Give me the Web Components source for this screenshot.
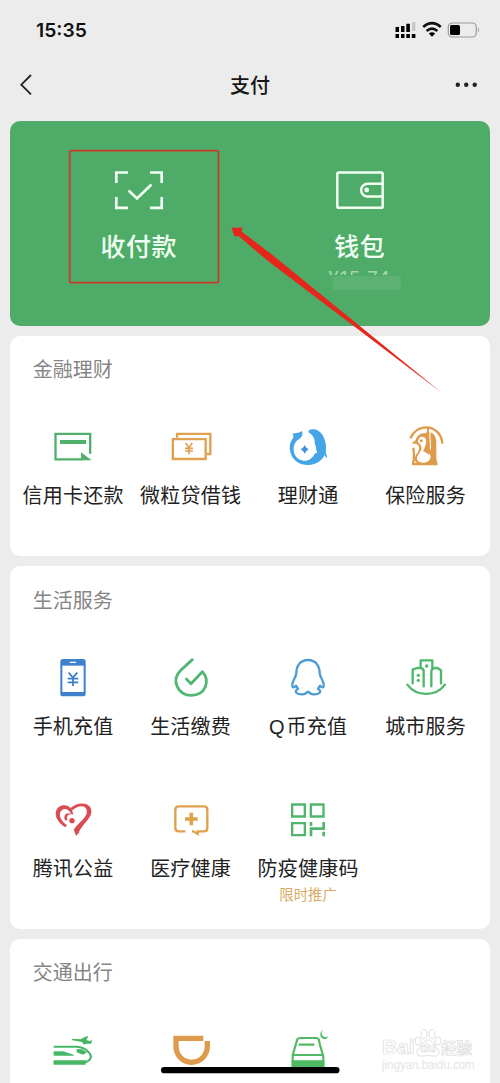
<!DOCTYPE html>
<html lang="zh-CN">
<head>
<meta charset="utf-8">
<title>支付</title>
<style>
html,body{margin:0;height:1083px;overflow:hidden;background:#ececec;font-family:"Noto Sans CJK SC","Noto Sans",sans-serif}
</style>
</head>
<body>
<pay-screen></pay-screen>
<script>
const ICONS = {
card:`<g fill="none" stroke="#4fb06b" stroke-width="7"><path d="M111.5 80V20.5H7.5V97H88"/><path d="M21 45H99" stroke-width="12"/></g><path fill="#4fb06b" d="M84 76L116 100H84Z"/>`,
loan:`<g fill="none" stroke="#dfa04f" stroke-width="7"><path d="M18.5 32V20.5H118V81H108"/><path d="M5.5 36.5H104V96H5.5Z"/></g><g fill="none" stroke="#dfa04f" stroke-width="5"><path d="M44 48L54 62L64 48M54 62V82M42 64H66M42 72H66"/></g>`,
fish:`<path fill="#45a5e8" d="M42 11C36 18 24 17 13 20C17 25 17 28 15 34C5 46 3 62 8 78C14 102 38 116 64 114C88 112 104 98 109 84L117 94C118 88 116 83 113 78C119 46 104 10 78 7C68 5 61 9 61 16C72 22 80 32 80 44C79 53 87 60 84 68L88 76L80 80C74 93 62 101 50 101C30 101 17 86 17 66C17 50 26 40 37 33C43 28 45 20 42 11Z"/><path fill="#3f91dc" d="M50 54L55 62L62 67L55 72L50 80L45 72L38 67L45 62Z"/>`,
insure:`<g fill="none" stroke="#df9b4c" stroke-width="7"><path d="M13 34C24 10 44 0 64 1C90 3 108 25 109 50"/><path d="M22 62Q26 84 21 112"/></g><path fill="#df9b4c" d="M66 14C82 16 91 26 91 46V91C91 101 95 107 95 115H18V108H33C24 103 25 91 31 82C36 75 40 70 39 60C37 49 26 52 17 48L29 40C32 26 43 17 58 19Z"/><path fill="#fff" d="M43 30C60 26 64 40 58 56L52 72L68 77C80 86 73 107 52 107C34 107 28 94 37 83C43 74 48 69 46 58C43 49 34 48 36 40Z"/><path d="M72 12C70 36 75 52 73 68" stroke="#fff" stroke-width="3.5" fill="none"/><path d="M66 3C64 32 69 48 67 78L53 69" stroke="#df9b4c" stroke-width="6" fill="none"/><circle cx="46" cy="41" r="4.5" fill="#df9b4c"/>`,
phone:`<rect x="22" y="3" width="76" height="112" rx="8" fill="#3f80cd"/><path fill="#fff" d="M28 23H92V102H28Z"/><path d="M52 13H68" stroke="#fff" stroke-width="4" stroke-linecap="round"/><path d="M47 44L60 59L73 44M60 59V84M44 62H76M44 73H76" fill="none" stroke="#3f80cd" stroke-width="5.5"/>`,
drop:`<path d="M64 5L28 38C0 67 20 112 61 112C103 112 119 69 94 41L60 77L46 63" fill="none" stroke="#51b873" stroke-width="8.5" stroke-linecap="round" stroke-linejoin="round"/>`,
qq:`<path d="M60 6C35 6 25 26 25 46C25 57 11 70 13 84C15 92 21 86 24 83C27 87 28 90 30 92C16 101 26 110 44 109C52 109 56 105 60 101C64 105 68 109 76 109C94 110 104 101 90 92C92 90 93 87 96 83C99 86 105 92 107 84C109 70 95 57 95 46C95 26 85 6 60 6Z" fill="none" stroke="#4d9dd4" stroke-width="7" stroke-linejoin="round"/>`,
city:`<g fill="none" stroke="#4db76c" stroke-width="7" stroke-linecap="round" stroke-linejoin="round"><path d="M4 80C32 117 89 117 117 80M20 76V35L33 30H44Q53 31 53 41V85M44 27V7H79V31M76 85V42Q76 30 88 30H94L105 37V76"/></g><g fill="#4db76c"><circle cx="62" cy="24" r="5"/><circle cx="37" cy="52" r="5"/><circle cx="37" cy="67" r="5"/></g>`,
heart:`<path fill="#d94e55" d="M61 44C58 24 46 13 29 16C10 19 3 40 12 57C18 68 27 76 37 82L42 76C26 64 17 50 22 37C28 22 47 24 54 42C40 34 30 46 36 61L44 61C38 49 47 39 61 44Z"/><circle cx="57" cy="62" r="8" fill="#d94e55"/><path fill="#d94e55" d="M50 26C70 7 102 4 113 23C125 53 84 72 77 100L69 107L62 89C74 68 107 51 101 29C95 14 76 16 58 31Z"/>`,
medical:`<path d="M43 94H23Q13 94 13 84V29Q13 19 23 19H99Q109 19 109 29V84Q109 94 99 94H80V102L67 94H63" fill="none" stroke="#dfa14d" stroke-width="7"/><path d="M61 38V76M42 57H80" stroke="#dfa14d" stroke-width="11"/>`,
qr:`<g fill="none" stroke="#50b66e" stroke-width="7"><path d="M12.5 13.5H50.5V49.5H12.5ZM68.5 13.5H106.5V49.5H68.5ZM12.5 69.5H50.5V105.5H12.5Z"/><path stroke-width="8" d="M69 66V78M107 66V86H69V109M107 95V109"/></g>`,
train:`<g transform="translate(0 27)"><path fill="none" stroke="#46b665" stroke-width="6" d="M2 23H69C97 24 113 42 114 54C111 67 101 71 82 72H2"/><path fill="#46b665" d="M2 64H99L98 77H2ZM2 37H30L62 47V50H2ZM71 30L87 31L102 40L90 47L71 40ZM57-1L83 1L97-7L106-9L100 3L109 6L118 4L114 14H99L93 17L87 9L58 4Z"/></g>`,
didi:`<path d="M97 25H15V49C15 76 36 97 61 97C88 97 109 76 109 49V33" fill="none" stroke="#df9b4d" stroke-width="16"/>`,
car:`<g transform="translate(0 20)"><path fill="none" stroke="#4fba63" stroke-width="6.5" d="M24 21L28 8Q30 4 37 4H84Q91 4 93 10L96 25L106 59V94M24 21L14 56V94M32 24H79M15 55H106"/><path fill="#4fba63" d="M11 71H109V98H11ZM107-21C97-17 99 0 114 2L122-1L115 6C96 12 90-16 107-21Z"/></g>`
};
function define(name, html){
  const t=document.createElement('template'); t.innerHTML=html;
  customElements.define(name, class extends HTMLElement{
    constructor(){super();this.attachShadow({mode:'open'}).append(t.content.cloneNode(true));}
  });
}
customElements.define('pay-icon', class extends HTMLElement{
  connectedCallback(){
    if(this.shadowRoot) return;
    this.attachShadow({mode:'open'}).innerHTML=`<style>:host{display:block;width:40px;height:40px}svg{display:block;overflow:visible}</style><svg width="40" height="40" viewBox="0 0 120 120">${ICONS[this.getAttribute('name')]}</svg>`;
  }
});
customElements.define('pay-item', class extends HTMLElement{
  connectedCallback(){
    if(this.shadowRoot) return;
    const label=this.getAttribute('label').replace(/^[A-Z]/, '<span>$&</span>');
    this.attachShadow({mode:'open'}).innerHTML=`<style>
:host{display:flex;flex-direction:column;align-items:center;height:142px;color:#222}
.l{font-size:20px;line-height:28px;height:28px;margin-top:14px;white-space:nowrap;letter-spacing:.25px}
.l span{font-family:"Liberation Sans",sans-serif;line-height:1;margin-right:1.5px}
::slotted(small){font-size:14.4px;line-height:20px;color:#dbab66;margin-top:2px}
</style><pay-icon name="${this.getAttribute('icon')}"></pay-icon><div class="l">${label}</div><slot></slot>`;
  }
});
define('pay-section',`<style>
:host{display:block;box-sizing:border-box;background:#fff;border-radius:10px;height:var(--h);padding-top:18.5px;flex:none}
h2{margin:0 0 0 23px;font-size:20px;line-height:30px;font-weight:400;color:#858585}
.grid{display:grid;grid-template-columns:repeat(4,117.5px);margin:43px 0 0 4.7px}
</style><h2><slot name="title"></slot></h2><div class="grid"><slot></slot></div>`);
define('status-bar',`<style>
:host{display:flex;height:60px;box-sizing:border-box;padding:0 20px 0 36px;align-items:center;justify-content:space-between;color:#111}
b{font:600 19.3px/24px Inter,sans-serif;}
svg{display:block}
</style><b>15:35</b>
<svg width="86" height="18" viewBox="0 0 86 18"><path fill="#c8c8c8" d="M18 1h3.4v9H18z"/><path d="M1.5 6h3.5v5H1.5zM7 5h3.5v6H7zM12.3 2.8h3.6V11h-3.6zM1.5 13H5v4H1.5zM7 13h3.5v4H7zM12.3 13h3.6v4h-3.6zM17.8 13h3.6v4h-3.6z"/><g fill="none" stroke="#111" stroke-width="2.5"><path d="M29.2 6Q38-1.7 46.8 6M32.6 10Q38 5.2 43.4 10"/></g><path d="M34.8 12.5Q38 9.8 41.2 12.5L38 15.8Z"/><rect x="54.3" y="2" width="28" height="14" rx="4" fill="none" stroke="#999" stroke-width="1.2"/><rect x="56" y="4" width="10" height="10" rx="1.6"/><path fill="#999" d="M84 6.5Q86 9 84 11.5Z"/></svg>`);
define('nav-bar',`<style>
:host{display:grid;grid-template-columns:60px 1fr 60px;height:61px;align-items:center;color:#171717}
h1{margin:0;text-align:center;font-size:20px;line-height:30px;font-weight:500;padding-bottom:12px}
svg{display:block}
</style><svg width="60" height="61"><path d="M31 15L21.3 24.7L31 34.4" fill="none" stroke="#222" stroke-width="1.8"/></svg><h1>支付</h1><svg width="60" height="61" fill="#222"><circle cx="17.8" cy="24.7" r="2.2"/><circle cx="26.2" cy="24.7" r="2.2"/><circle cx="34.7" cy="24.7" r="2.2"/></svg>`);
define('pay-hero',`<style>
:host{display:grid;grid-template-columns:221px 221px;height:204.5px;padding:0 19px 0 18.5px;box-sizing:border-box;background:#4eac68;border-radius:10px;color:#f0fff1;flex:none}
div{display:flex;flex-direction:column;align-items:center;padding-top:48px;position:relative}
span{font-size:25px;line-height:36px;margin-top:16px;font-weight:500;letter-spacing:.4px}
svg{display:block;flex:none}
p{font:19px/19px Inter,sans-serif;letter-spacing:1.1px;color:#a4d6b1;margin:6px 0 0}
i{position:absolute;top:154px;left:66px;width:90px;height:20px;background:#4eac68}
i::after{content:"";position:absolute;left:18px;top:1px;width:68px;height:14px;background:#5bb273;border-radius:2px}
</style>
<div><svg width="50" height="42" viewBox="0 0 50 42" fill="none" stroke="#f0fff1" stroke-width="2.7"><path d="M2.3 14V3.5H14M36 3.5H47.7V14M47.7 28V38.8H36M14 38.8H2.3V28M14.5 21.5L23 29.5L37.5 15.5"/></svg><span>收付款</span></div>
<div><svg width="50" height="42" viewBox="0 0 50 42" fill="none" stroke="#f0fff1" stroke-width="2.5"><rect x="2.3" y="3.4" width="45.4" height="35.4" rx="1.3"/><path d="M47.7 14.7H32.5A6.3 6.3 0 0 0 32.5 27.5H47.7"/><circle cx="31.7" cy="21" r="2.4" fill="#f0fff1" stroke="none"/></svg><span>钱包</span><p>¥15.74</p><i></i></div>`);
define('water-mark',`<style>
:host{display:block;position:absolute;left:382px;top:1027px;width:92px;height:46px;color:#fff}
.b{position:relative;display:grid;grid-template-columns:33px 26px 32px;align-items:center;height:29px;padding-top:8px;box-sizing:border-box;font:700 21px/22px "Liberation Sans",sans-serif;-webkit-text-stroke:.7px #dcdcdc}
em{font-style:normal;font-size:13px;text-align:center;padding-top:2px}
u{text-decoration:none;font:700 15.5px/20px "Noto Sans CJK SC",sans-serif}
.u{font:12.5px/14px "Liberation Sans",sans-serif;color:#e4e4e4;margin-top:2px;white-space:nowrap;transform-origin:left;transform:scaleX(.92)}
svg{position:absolute;left:32px;top:1px}
</style><svg width="28" height="30" viewBox="0 0 28 30" fill="#fff" stroke="#e0e0e0"><ellipse cx="4" cy="13" rx="3" ry="4"/><ellipse cx="10" cy="6" rx="3" ry="4.5"/><ellipse cx="18" cy="6" rx="3" ry="4.5"/><ellipse cx="24" cy="13" rx="3" ry="4"/><path d="M14 12C9 12 8 18 4 21C1 26 5 29 9 28Q14 27 19 28C24 29 27 25 24 21C20 18 19 12 14 12Z"/></svg><div class="b">Bai<em>du</em><u>经验</u></div><div class="u">jingyan.baidu.com</div>`);
define('pay-notes',`<style>:host{position:absolute;left:0;top:0;width:500px;height:1083px}svg{display:block}</style><svg width="500" height="1083"><rect x="69.7" y="150.7" width="148.8" height="132" rx="1" fill="none" stroke="#c73b27" stroke-width="1.7"/><path fill="#e6261a" d="M231.5 227.7L242.5 227.5L241.5 231.5L272.2 254.8L354.2 321.6L442 393L351.8 324.6L267.6 260.8L238.5 236L234.5 236.5Z"/><rect x="161" y="1067" width="178.5" height="6.3" rx="3.1" fill="#000"/></svg>`);
define('pay-screen',`<style>
:host{display:block;position:relative;width:500px;height:1083px;overflow:hidden;background:#ececec}
main{display:flex;flex-direction:column;gap:10.3px;padding:0 10px 0 9.7px}
</style>
<status-bar></status-bar><nav-bar></nav-bar>
<main><pay-hero></pay-hero>
<pay-section style="--h:220px"><span slot="title">金融理财</span>
<pay-item icon="card" label="信用卡还款"></pay-item><pay-item icon="loan" label="微粒贷借钱"></pay-item><pay-item icon="fish" label="理财通"></pay-item><pay-item icon="insure" label="保险服务"></pay-item></pay-section>
<pay-section style="--h:362.5px"><span slot="title">生活服务</span>
<pay-item icon="phone" label="手机充值"></pay-item><pay-item icon="drop" label="生活缴费"></pay-item><pay-item icon="qq" label="Q币充值"></pay-item><pay-item icon="city" label="城市服务"></pay-item>
<pay-item icon="heart" label="腾讯公益"></pay-item><pay-item icon="medical" label="医疗健康"></pay-item><pay-item icon="qr" label="防疫健康码"><small>限时推广</small></pay-item></pay-section>
<pay-section style="--h:220px"><span slot="title">交通出行</span>
<pay-item icon="train" label=""></pay-item><pay-item icon="didi" label=""></pay-item><pay-item icon="car" label=""></pay-item></pay-section>
</main><water-mark></water-mark><pay-notes></pay-notes>`);
</script>
</body>
</html>
